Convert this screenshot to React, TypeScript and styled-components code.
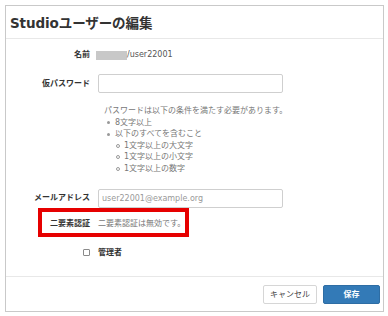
import styled, { createGlobalStyle } from "styled-components"

const GlobalStyle = createGlobalStyle`
  html, body {
    margin: 0;
    padding: 0;
    background: #fff;
  }
  body {
    font-family: "DejaVu Sans", "Noto Sans CJK JP", sans-serif;
    font-size: 8px;
    color: #333;
  }
`

// ─── Modal frame ─────────────────────────────────────────────────────────────

const Modal = styled.div`
  width: 379px;
  margin: 5px;
  border: 1px solid #c9c9c9;
  box-sizing: border-box;
  background: #fff;
  display: flex;
  flex-direction: column;
`

const Header = styled.div`
  height: 32px;
  display: flex;
  align-items: center;
  padding: 0 4px;
  border-bottom: 1px solid #e8e8e8;
`

const Title = styled.h1`
  margin: 0;
  font-size: 13.5px;
  font-weight: bold;
  color: #333;
  letter-spacing: -0.1px;
`

const Body = styled.div`
  display: flex;
  flex-direction: column;
  padding: 10px 0 17px;
`

const Footer = styled.div`
  display: flex;
  justify-content: flex-end;
  gap: 6px;
  padding: 8px 3px 7px;
  border-top: 1px solid #e8e8e8;
`

// ─── Form rows ───────────────────────────────────────────────────────────────

const Row = styled.div<{ $top?: number }>`
  position: relative;
  display: grid;
  grid-template-columns: 84px 185px;
  column-gap: 8px;
  align-items: center;
  margin-top: ${({ $top }) => $top ?? 0}px;
  line-height: 12px;
`

const Label = styled.div`
  display: flex;
  justify-content: flex-end;
  align-items: center;
  font-weight: bold;
  color: #333;
`

const CheckLabel = styled.div`
  font-weight: bold;
  color: #333;
`

const Value = styled.div<{ $muted?: boolean }>`
  display: flex;
  align-items: center;
  color: ${({ $muted }) => ($muted ? "#777" : "#555")};
  white-space: nowrap;
`

const Masked = styled.span`
  display: inline-block;
  width: 31px;
  height: 9px;
  margin-left: -2px;
  background: #c8c8c8;
`

const Input = styled.input`
  box-sizing: border-box;
  width: 185px;
  height: 19px;
  border: 1px solid #cfcfcf;
  border-radius: 2px;
  padding: 0 3px;
  font: inherit;
  color: #555;
  outline: none;

  &::placeholder {
    color: #999;
  }
`

const Help = styled.div`
  margin: 12px 0 0 98px;
  color: #777;
  line-height: 11.6px;
`

const List = styled.ul<{ $sub?: boolean }>`
  margin: 0;
  padding: 0 0 0 ${({ $sub }) => ($sub ? 1 : 3)}px;
  list-style: none;
`

const Item = styled.li<{ $sub?: boolean }>`
  position: relative;
  padding-left: 8px;

  &::before {
    content: "";
    position: absolute;
    left: 0;
    top: ${({ $sub }) => ($sub ? 4 : 4.5)}px;
    box-sizing: border-box;
    width: ${({ $sub }) => ($sub ? 4 : 3)}px;
    height: ${({ $sub }) => ($sub ? 4 : 3)}px;
    border-radius: 50%;
    background: ${({ $sub }) => ($sub ? "transparent" : "#999")};
    border: ${({ $sub }) => ($sub ? "1px solid #999" : "none")};
  }
`

const Highlight = styled.div`
  position: absolute;
  left: 32px;
  top: -10px;
  width: 151px;
  height: 29px;
  box-sizing: border-box;
  border: 4px solid #e60000;
  pointer-events: none;
`

const Checkbox = styled.span`
  display: inline-block;
  box-sizing: border-box;
  width: 7px;
  height: 7px;
  border: 1px solid #8a8a8a;
  border-radius: 1px;
  background: #fff;
`

// ─── Buttons ─────────────────────────────────────────────────────────────────

const Button = styled.button<{ $primary?: boolean }>`
  box-sizing: border-box;
  height: 19px;
  width: ${({ $primary }) => ($primary ? 57 : 54)}px;
  padding: 0;
  border-radius: 2px;
  font: inherit;
  line-height: 17px;
  border: 1px solid ${({ $primary }) => ($primary ? "#2e6da4" : "#d6d6d6")};
  background: ${({ $primary }) => ($primary ? "#337ab7" : "#fff")};
  color: ${({ $primary }) => ($primary ? "#fff" : "#444")};
  font-weight: ${({ $primary }) => ($primary ? "bold" : "normal")};
`

export default function App() {
  return (
    <>
      <GlobalStyle />
      <Modal>
        <Header>
          <Title>Studioユーザーの編集</Title>
        </Header>

        <Body>
          <Row>
            <Label>名前</Label>
            <Value>
              <Masked />
              /user22001
            </Value>
          </Row>

          <Row $top={13}>
            <Label>仮パスワード</Label>
            <Input type="password" />
          </Row>

          <Help>
            パスワードは以下の条件を満たす必要があります。
            <List>
              <Item>8文字以上</Item>
              <Item>
                以下のすべてを含むこと
                <List $sub>
                  <Item $sub>1文字以上の大文字</Item>
                  <Item $sub>1文字以上の小文字</Item>
                  <Item $sub>1文字以上の数字</Item>
                </List>
              </Item>
            </List>
          </Help>

          <Row $top={14}>
            <Label>メールアドレス</Label>
            <Input placeholder="user22001@example.org" />
          </Row>

          <Row $top={10}>
            <Highlight />
            <Label>二要素認証</Label>
            <Value $muted>二要素認証は無効です。</Value>
          </Row>

          <Row $top={17}>
            <Label>
              <Checkbox />
            </Label>
            <CheckLabel>管理者</CheckLabel>
          </Row>
        </Body>

        <Footer>
          <Button>キャンセル</Button>
          <Button $primary>保存</Button>
        </Footer>
      </Modal>
    </>
  )
}
